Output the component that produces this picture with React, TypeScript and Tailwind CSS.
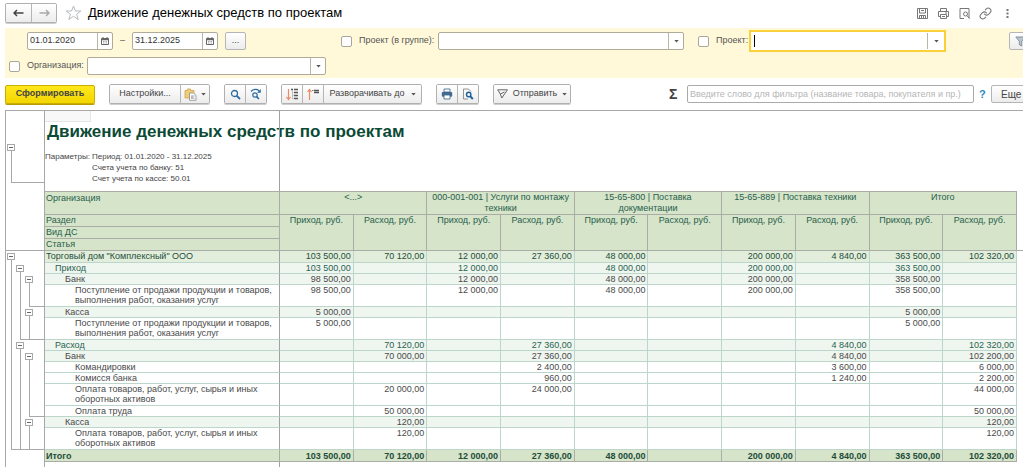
import type { ReactNode } from 'react';

type Slot = 'box' | 'line' | 'end' | 'none';

type Row = {
  name: string;
  level: number;
  slots: [Slot, Slot, Slot];
  values: string[];
  tall?: boolean;
};

const projects = [
  '<...>',
  '000-001-001 | Услуги по монтажу техники',
  '15-65-800 | Поставка документации',
  '15-65-889 | Поставка техники',
  'Итого',
];

const goods = 'Поступление от продажи продукции и товаров, выполнения работ, оказания услуг';
const payment = 'Оплата товаров, работ, услуг, сырья и иных оборотных активов';

const rows: Row[] = [
  {
    name: 'Торговый дом "Комплексный" ООО',
    level: 0,
    slots: ['box', 'none', 'none'],
    values: ['103 500,00', '70 120,00', '12 000,00', '27 360,00', '48 000,00', '', '200 000,00', '4 840,00', '363 500,00', '102 320,00'],
  },
  { name: 'Приход', level: 1, slots: ['line', 'box', 'none'], values: ['103 500,00', '', '12 000,00', '', '48 000,00', '', '200 000,00', '', '363 500,00', ''] },
  { name: 'Банк', level: 2, slots: ['line', 'line', 'box'], values: ['98 500,00', '', '12 000,00', '', '48 000,00', '', '200 000,00', '', '358 500,00', ''] },
  { name: goods, level: 3, tall: true, slots: ['line', 'line', 'end'], values: ['98 500,00', '', '12 000,00', '', '48 000,00', '', '200 000,00', '', '358 500,00', ''] },
  { name: 'Касса', level: 2, slots: ['line', 'line', 'box'], values: ['5 000,00', '', '', '', '', '', '', '', '5 000,00', ''] },
  { name: goods, level: 3, tall: true, slots: ['line', 'end', 'end'], values: ['5 000,00', '', '', '', '', '', '', '', '5 000,00', ''] },
  { name: 'Расход', level: 1, slots: ['line', 'box', 'none'], values: ['', '70 120,00', '', '27 360,00', '', '', '', '4 840,00', '', '102 320,00'] },
  { name: 'Банк', level: 2, slots: ['line', 'line', 'box'], values: ['', '70 000,00', '', '27 360,00', '', '', '', '4 840,00', '', '102 200,00'] },
  { name: 'Командировки', level: 3, slots: ['line', 'line', 'line'], values: ['', '', '', '2 400,00', '', '', '', '3 600,00', '', '6 000,00'] },
  { name: 'Комисся банка', level: 3, slots: ['line', 'line', 'line'], values: ['', '', '', '960,00', '', '', '', '1 240,00', '', '2 200,00'] },
  { name: payment, level: 3, tall: true, slots: ['line', 'line', 'line'], values: ['', '20 000,00', '', '24 000,00', '', '', '', '', '', '44 000,00'] },
  { name: 'Оплата труда', level: 3, slots: ['line', 'line', 'end'], values: ['', '50 000,00', '', '', '', '', '', '', '', '50 000,00'] },
  { name: 'Касса', level: 2, slots: ['line', 'line', 'box'], values: ['', '120,00', '', '', '', '', '', '', '', '120,00'] },
  { name: payment, level: 3, tall: true, slots: ['end', 'end', 'end'], values: ['', '120,00', '', '', '', '', '', '', '', '120,00'] },
];

const totals = ['103 500,00', '70 120,00', '12 000,00', '27 360,00', '48 000,00', '', '200 000,00', '4 840,00', '363 500,00', '102 320,00'];

const levelBg = ['bg-[#e2eedb]', 'bg-[#eff5ef]', 'bg-[#eff5ef]', 'bg-white'];
const levelText = ['text-[#1d4d3a]', 'text-[#2a6450]', 'text-[#4a4a4a]', 'text-[#4a4a4a]'];
const levelPad = ['pl-px', 'pl-[10px]', 'pl-[20px]', 'pl-[30px]'];

const btn =
  'flex h-[18px] shrink-0 items-center justify-center border-[#b5b5b5] bg-linear-to-b from-white to-[#ececec] text-[#444]';
const group = 'flex shrink-0 overflow-hidden rounded-xs border border-[#b0b0b0] shadow-[0_1px_0_#cfcfcf]';

function Caret() {
  return (
    <svg width="5" height="3" viewBox="0 0 5 3" fill="#555">
      <path d="M.3 0h4.400L2.500 2.600z" />
    </svg>
  );
}

function CalendarIcon() {
  return (
    <svg width="8" height="8" viewBox="0 0 8 8" fill="none" stroke="#666">
      <path d="M.5 1.500h7v6h-7z" />
      <path d="M0 2.500h8" strokeWidth="1.500" />
      <path d="M2 0v2M6 0v2" />
      <path d="M2 4.500h4M2 6h4" strokeWidth=".6" strokeDasharray="1 .5" />
    </svg>
  );
}

function DateField({ label, value }: { label: string; value: string }) {
  return (
    <div className="flex h-[18px] w-[86px] shrink-0 rounded-xs border border-[#b0ab98] bg-white">
      <input aria-label={label} defaultValue={value} className="w-0 flex-1 pl-[2px] text-[9px] text-[#333] outline-none" />
      <button aria-label="Календарь" className="flex w-[15px] items-center justify-center border-l border-[#b8b5aa]">
        <CalendarIcon />
      </button>
    </div>
  );
}

function Check({ label }: { label: string }) {
  return (
    <input
      type="checkbox"
      aria-label={label}
      className="size-[11px] shrink-0 appearance-none rounded-xs border border-[#aaa69a] bg-white"
    />
  );
}

function SelectField({ id, className }: { id: string; className: string }) {
  return (
    <div className={`relative h-[18px] shrink-0 rounded-xs border border-[#b0ab98] bg-white ${className}`}>
      <select id={id} className="h-full w-full appearance-none text-[9px] outline-none">
        <option value=""></option>
      </select>
      <span className="pointer-events-none absolute inset-y-0 right-0 flex w-[15px] items-center justify-center border-l border-[#b8b5aa]">
        <Caret />
      </span>
    </div>
  );
}

function Magnifier() {
  return (
    <svg width="11" height="11" viewBox="0 0 11 11" fill="none" stroke="#2d6da3">
      <circle cx="4.500" cy="4.500" r="3" strokeWidth="1.300" />
      <path d="M6.800 6.800L10 10" strokeWidth="1.800" />
    </svg>
  );
}

function MagnifierNext() {
  return (
    <svg width="12" height="12" viewBox="0 0 12 12" fill="none" stroke="#2d6da3">
      <circle cx="5" cy="7" r="2.200" strokeWidth="1.200" />
      <path d="M6.700 8.600L8.800 11" strokeWidth="1.700" />
      <path d="M1 3.500C3 1 7 .8 9 2.700" strokeWidth="1.300" />
      <path d="M10.800 1v3.800H7z" fill="#2d6da3" stroke="none" />
    </svg>
  );
}

function PasteFolder() {
  return (
    <svg width="13" height="13" viewBox="0 0 13 13">
      <path d="M1 2.500V10h9V2.500H6.500V1h-3v1.500z" fill="#f0cd78" stroke="#cfa24a" strokeWidth=".8" />
      <path d="M5.500 5h4L12 7.300V12.300H5.500z" fill="#fff" stroke="#8a8a8a" strokeWidth=".8" />
      <path d="M7 8h3.500M7 10.200h3.500" stroke="#6a8bb0" strokeWidth=".8" />
      <path d="M7 9.200h2" stroke="#d9705a" strokeWidth=".8" />
    </svg>
  );
}

function ExpandIcon() {
  return (
    <svg width="13" height="13" viewBox="0 0 13 13" fill="none">
      <path d="M2.500 1v10M.5 9l2 2.500L4.500 9" stroke="#ee8a62" strokeWidth="1.200" />
      <path d="M5 1.500h2M8 1.500h4M8 4.500h4M8 7.500h4M8 10.500h4" stroke="#555" strokeWidth="1.300" />
      <path d="M6.500 2v9M6.500 4.500h1M6.500 7.500h1M6.500 10.500h1" stroke="#aaa" strokeWidth=".7" />
    </svg>
  );
}

function CollapseIcon() {
  return (
    <svg width="13" height="13" viewBox="0 0 13 13" fill="none">
      <path d="M2.500 12V2M.5 4l2-2.500L4.500 4" stroke="#ee8a62" strokeWidth="1.200" />
      <path d="M5 2.500h1.500" stroke="#777" />
      <path d="M7 2.500h5M7 4.500h5" stroke="#555" strokeWidth="1.300" />
    </svg>
  );
}

function PrinterBlue() {
  return (
    <svg width="12" height="12" viewBox="0 0 12 12">
      <path d="M3 1h6v3H3z" fill="#fff" stroke="#4a6f94" strokeWidth=".9" />
      <rect x=".8" y="4" width="10.400" height="4.800" rx="1" fill="#41698f" />
      <path d="M3 7h6v4H3z" fill="#fff" stroke="#4a6f94" strokeWidth=".9" />
    </svg>
  );
}

function PreviewBlue() {
  return (
    <svg width="12" height="12" viewBox="0 0 12 12" fill="none">
      <path d="M6 11H1.500V1h5L9 3.500" stroke="#888" strokeWidth=".9" />
      <circle cx="6.700" cy="6.500" r="2.200" stroke="#1f5f98" strokeWidth="1.400" />
      <path d="M8 8l2.800 3" stroke="#1f5f98" strokeWidth="1.900" />
    </svg>
  );
}

function SendIcon() {
  return (
    <svg width="11" height="10" viewBox="0 0 11 10" fill="none" stroke="#666" strokeLinejoin="round">
      <path d="M.7.8h9.800L4.800 9 3.300 5z" />
      <path d="M3.300 5L7.500 3" />
    </svg>
  );
}

function FunnelIcon() {
  return (
    <svg width="11" height="11" viewBox="0 0 11 11">
      <path d="M.8 1h9.400L6.700 5.200V10L4.300 8.700V5.200z" fill="#bcc6cf" stroke="#7d8994" strokeWidth=".9" />
    </svg>
  );
}

function HeaderIcons() {
  return (
    <div className="ml-auto flex shrink-0 items-center gap-[8px] pr-[12px] text-[#777]">
      <button aria-label="Сохранить">
        <svg width="13" height="13" viewBox="0 0 13 13" fill="none" stroke="currentColor">
          <path d="M1.500 1.500h10v10h-10z" />
          <path d="M3.500 1.500V6h6V1.500M5 3.500h3" />
          <path d="M3.500 11.500v-3h6v3M5.500 9v2.500M7.500 9v2.500" />
        </svg>
      </button>
      <button aria-label="Печать">
        <svg width="13" height="13" viewBox="0 0 13 13" fill="none" stroke="currentColor">
          <path d="M3.500 4V1.500h6V4M3 9.500H1.500V4.500h10v5H10" />
          <path d="M3.500 7.500h6v4h-6zM5 9.500h3M8 6h2" />
        </svg>
      </button>
      <button aria-label="Предварительный просмотр">
        <svg width="13" height="13" viewBox="0 0 13 13" fill="none" stroke="currentColor">
          <path d="M6 11.500H2v-10h9V11" />
          <circle cx="7.500" cy="7" r="2" />
          <path d="M8.900 8.500l2.600 3.200" />
        </svg>
      </button>
      <button aria-label="Получить ссылку">
        <svg width="13" height="13" viewBox="0 0 24 24" fill="none" stroke="currentColor" strokeWidth="2" strokeLinecap="round">
          <path d="M10 13a5 5 0 0 0 7.540.54l3-3a5 5 0 0 0-7.070-7.070l-1.720 1.710" />
          <path d="M14 11a5 5 0 0 0-7.540-.54l-3 3a5 5 0 0 0 7.070 7.070l1.710-1.710" />
        </svg>
      </button>
      <button aria-label="Меню" className="ml-[4px]">
        <svg width="7" height="11" viewBox="0 0 7 11" fill="#777">
          <path d="M2.500 1h2v2h-2zM2.500 4.500h2v2h-2zM2.500 8h2v2h-2z" />
        </svg>
      </button>
    </div>
  );
}

function CollapseBox() {
  return (
    <button
      aria-label="Свернуть"
      className="flex h-[7px] w-[8px] shrink-0 items-center justify-center border border-[#a8a8a8] bg-white"
    >
      <i className="h-px w-[4px] bg-[#666]" />
    </button>
  );
}

function Outline({ slots }: { slots: Slot[] }) {
  const end = slots.indexOf('end');
  return (
    <div className="flex h-full pl-px">
      {slots.map((slot, i) => {
        const after = end >= 0 && i > end;
        const from = end >= 0 && i >= end;
        if (slot === 'box') {
          return (
            <div key={i} className="flex w-[9px] flex-col pt-[2px]">
              <CollapseBox />
              <i className="ml-[4px] flex-1 border-l border-[#a8a8a8]" />
            </div>
          );
        }
        return (
          <div key={i} className="flex w-[9px]">
            <i className={`w-[4px] border-[#a8a8a8] ${after ? 'border-b' : ''}`} />
            <i className={`flex-1 border-[#a8a8a8] ${slot === 'none' ? '' : 'border-l'} ${from ? 'border-b' : ''}`} />
          </div>
        );
      })}
      <i className={`flex-1 border-[#a8a8a8] ${end >= 0 ? 'border-b' : ''}`} />
    </div>
  );
}

function Gutter({ children, className = '' }: { children?: ReactNode; className?: string }) {
  return <td className={`border-r border-l border-[#a8a8a8] p-0 ${className}`}>{children}</td>;
}

function ReportTable() {
  const head = 'border-r border-b border-[#a9ada6] bg-[#d6e4ca] p-0 align-top';
  return (
    <table className="w-full table-fixed border-separate border-spacing-0 text-[9px] leading-[10px]">
      <colgroup>
        <col className="w-[40px]" />
        <col className="w-[235px]" />
        {totals.map((_, i) => (
          <col key={i} />
        ))}
        <col className="w-[6px]" />
      </colgroup>
      <thead className="text-[#27604a]">
        <tr className="h-[24px]">
          <Gutter />
          <th className={`${head} border-t pt-px pl-px text-left font-normal`}>Организация</th>
          {projects.map((p) => (
            <th key={p} colSpan={2} className={`${head} border-t px-[2px] leading-[11px] font-normal`}>
              {p}
            </th>
          ))}
          <td />
        </tr>
        {['Раздел', 'Вид ДС', 'Статья'].map((name, i) => (
          <tr key={name} className="h-[12px]">
            <Gutter className={i === 2 ? 'border-b' : ''} />
            <th className={`${head} pl-px text-left font-normal`}>{name}</th>
            {i === 0 &&
              totals.map((_, n) => (
                <th key={n} rowSpan={3} className={`${head} font-normal`}>
                  {n % 2 === 0 ? 'Приход, руб.' : 'Расход, руб.'}
                </th>
              ))}
            <td className={i === 2 ? 'border-b border-[#a9ada6]' : ''} />
          </tr>
        ))}
      </thead>
      <tbody>
        {rows.map((row, i) => (
          <tr
            key={i}
            className={`${row.tall ? 'h-[22px]' : row.level === 0 ? 'h-[12px]' : 'h-[11px]'} ${levelText[row.level]}`}
          >
            <Gutter className="h-px">
              <Outline slots={row.slots} />
            </Gutter>
            <td
              className={`border-r border-b border-r-[#a0a0a0] border-b-[#bcd6cb] p-0 align-top ${levelBg[row.level]} ${levelPad[row.level]}`}
            >
              {row.name}
            </td>
            {row.values.map((v, n) => (
              <td
                key={n}
                className={`border-r border-b border-[#bcd6cb] p-0 pr-[2px] text-right align-top ${levelBg[row.level]}`}
              >
                {v}
              </td>
            ))}
            <td />
          </tr>
        ))}
        <tr className="h-[12px] font-bold text-[#1d4d3a]">
          <Gutter />
          <td className={`${head} pt-px pl-px`}>Итого</td>
          {totals.map((v, n) => (
            <td key={n} className={`${head} pt-px pr-[2px] text-right`}>
              {v}
            </td>
          ))}
          <td />
        </tr>
      </tbody>
    </table>
  );
}

export default function App() {
  return (
    <div className="flex min-h-screen flex-col overflow-hidden bg-white pl-[5px] font-['Liberation_Sans',Arial,sans-serif] text-[9px] text-[#555]">
      <header className="flex h-[26px] items-center">
        <div className={`${group} mr-[8px]`}>
          <button aria-label="Назад" className={`${btn} w-[26px] border-r`}>
            <svg width="11" height="8" viewBox="0 0 11 8" fill="none" stroke="#444" strokeWidth="1.500">
              <path d="M10.500 4H1M4 1L1 4l3 3" />
            </svg>
          </button>
          <button aria-label="Вперед" className={`${btn} w-[24px]`}>
            <svg width="11" height="8" viewBox="0 0 11 8" fill="none" stroke="#aaa" strokeWidth="1.500">
              <path d="M.5 4H10M7 1l3 3-3 3" />
            </svg>
          </button>
        </div>
        <button aria-label="В избранное">
          <svg width="17" height="16" viewBox="0 0 17 16" fill="#fff" stroke="#b5b9bd">
            <path d="M8.500 1l2 5h5.300l-4.200 3.300 1.600 5.200-4.700-3.200-4.700 3.200 1.600-5.200L1.200 6h5.300z" />
          </svg>
        </button>
        <h1 className="ml-[6px] text-[13px] whitespace-nowrap text-black">Движение денежных средств по проектам</h1>
        <HeaderIcons />
      </header>

      <section className="mt-[2px] overflow-hidden bg-[#fff9da]">
        <div className="flex h-[26px] items-center">
          <div className="ml-[22px] flex items-center">
            <DateField label="Начало периода" value="01.01.2020" />
            <span className="w-[19px] text-center">–</span>
            <DateField label="Конец периода" value="31.12.2025" />
            <button className={`${btn} ml-[7px] w-[21px] rounded-xs border border-[#b5b5b5]`}>...</button>
          </div>
          <div className="ml-[95px] flex items-center">
            <Check label="Отбор по группе проектов" />
            <label htmlFor="project-group" className="ml-[7px] w-[79px] whitespace-nowrap">
              Проект (в группе):
            </label>
            <SelectField id="project-group" className="w-[246px]" />
          </div>
          <div className="ml-[14px] flex items-center">
            <Check label="Отбор по проекту" />
            <label htmlFor="project" className="ml-[7px] w-[33px] whitespace-nowrap">
              Проект:
            </label>
            <div className="relative flex h-[22px] w-[197px] border-2 border-[#fbd13a] bg-white">
              <input id="project" className="w-0 flex-1 pl-[4px] outline-none" />
              <i className="absolute top-[3px] left-[3px] h-[12px] w-px bg-black" />
              <button aria-label="Выбрать" className="my-px flex w-[17px] items-center justify-center border-l border-[#b8b5aa]">
                <Caret />
              </button>
            </div>
          </div>
          <button
            aria-label="Отборы"
            className={`${btn} -mr-[8px] ml-auto w-[22px] rounded-xs border border-[#b5b5b5]`}
          >
            <FunnelIcon />
          </button>
        </div>
        <div className="flex h-[24px] items-center pl-[4px]">
          <Check label="Отбор по организации" />
          <label htmlFor="org" className="ml-[7px] w-[60px] whitespace-nowrap">
            Организация:
          </label>
          <SelectField id="org" className="w-[239px]" />
        </div>
      </section>

      <div className="flex h-[32px] items-center overflow-hidden">
        <button className="h-[19px] w-[90px] shrink-0 rounded-xs border border-[#c9ae00] bg-linear-to-b from-[#ffe81a] to-[#f3d500] font-bold text-[#444] shadow-[0_1px_0_#b59c00]">
          Сформировать
        </button>
        <div className={`${group} ml-[14px]`}>
          <button className={`${btn} w-[71px] border-r`}>Настройки...</button>
          <button aria-label="Варианты" className={`${btn} w-[28px] gap-[4px]`}>
            <PasteFolder />
            <Caret />
          </button>
        </div>
        <div className={`${group} ml-[14px]`}>
          <button aria-label="Найти" className={`${btn} w-[21px] border-r`}>
            <Magnifier />
          </button>
          <button aria-label="Найти далее" className={`${btn} w-[20px]`}>
            <MagnifierNext />
          </button>
        </div>
        <div className={`${group} ml-[14px]`}>
          <button aria-label="Развернуть" className={`${btn} w-[21px] border-r`}>
            <ExpandIcon />
          </button>
          <button aria-label="Свернуть" className={`${btn} w-[21px] border-r`}>
            <CollapseIcon />
          </button>
          <button className={`${btn} w-[97px] gap-[6px]`}>
            Разворачивать до
            <Caret />
          </button>
        </div>
        <div className={`${group} ml-[14px]`}>
          <button aria-label="Печать" className={`${btn} w-[21px] border-r`}>
            <PrinterBlue />
          </button>
          <button aria-label="Просмотр" className={`${btn} w-[20px]`}>
            <PreviewBlue />
          </button>
        </div>
        <div className={`${group} ml-[14px]`}>
          <button className={`${btn} w-[76px] gap-[5px]`}>
            <SendIcon />
            Отправить
            <Caret />
          </button>
        </div>
        <button aria-label="Сумма" className="ml-[98px] w-[18px] shrink-0 text-left text-[14px] font-bold text-[#444]">
          Σ
        </button>
        <input
          aria-label="Фильтр"
          placeholder="Введите слово для фильтра (название товара, покупателя и пр.)"
          className="h-[18px] w-0 min-w-[120px] flex-1 rounded-xs border border-[#aaa] px-[2px] outline-none placeholder:text-[#b5b5b5]"
        />
        <button aria-label="Справка" className="w-[17px] shrink-0 pl-[5px] text-left text-[11px] font-bold text-[#2a8ac4]">
          ?
        </button>
        <button className="-mr-[12px] flex h-[18px] w-[44px] shrink-0 items-center rounded-xs border border-[#b5b5b5] bg-linear-to-b from-white to-[#ececec] pl-[9px] text-[10px] text-[#444]">
          Еще
        </button>
      </div>

      <main className="flex flex-1 flex-col">
        <div className="flex h-[81px] border-t border-[#a8a8a8]">
          <div className="flex w-[40px] shrink-0 flex-col border-r border-l border-[#a8a8a8] pt-[33px] pl-px">
            <CollapseBox />
            <i className="ml-[4px] h-[32px] border-b border-l border-[#a8a8a8]" />
          </div>
          <div className="relative w-[235px] shrink-0 whitespace-nowrap">
            <div className="h-[11px] w-[46px] border-r border-b border-[#e6e6e6] bg-[#f8f8f8]" />
            <h2 className="pl-[2px] text-[17px] leading-[20px] font-bold text-[#0b4a35]">
              Движение денежных средств по проектам
            </h2>
            <dl className="mt-[9px] flex text-[8px] leading-[11px] text-[#444]">
              <dt className="w-[47px]">Параметры:</dt>
              <dd>
                <p>Период: 01.01.2020 - 31.12.2025</p>
                <p>Счета учета по банку: 51</p>
                <p>Счет учета по кассе: 50.01</p>
              </dd>
            </dl>
            <i className="absolute inset-y-0 right-0 border-r border-[#a0a0a0]" />
          </div>
        </div>
        <ReportTable />
        <div className="flex flex-1">
          <div className="w-[40px] border-r border-l border-[#a8a8a8]" />
          <div className="w-[235px] border-r border-[#a0a0a0]" />
        </div>
      </main>
    </div>
  );
}
